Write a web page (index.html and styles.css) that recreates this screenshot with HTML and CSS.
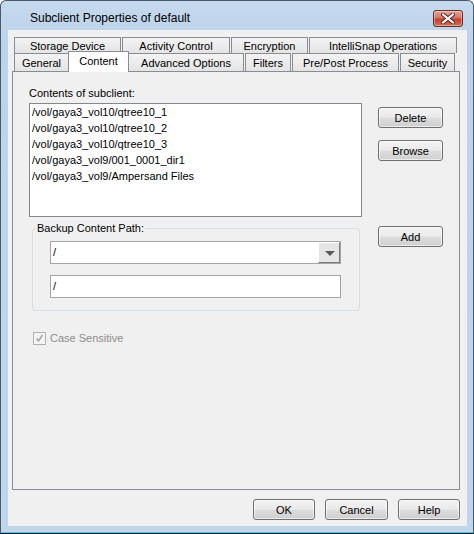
FILE: index.html
```html
<!DOCTYPE html>
<html lang="en">
<head>
<meta charset="UTF-8">
<title>Subclient Properties of default</title>
<link rel="stylesheet" href="styles.css">
</head>
<body>
<div class="window">
    <div class="titlebar">
        <span class="title">Subclient Properties of default</span>
        <button class="close" title="Close">
            <svg width="14" height="11" viewBox="0 0 14 11">
                <path d="M2 1.5 L12 9.5 M12 1.5 L2 9.5" stroke="#5a2520" stroke-width="4" stroke-linecap="square"/>
                <path d="M2 1.5 L12 9.5 M12 1.5 L2 9.5" stroke="#ffffff" stroke-width="2" stroke-linecap="square"/>
            </svg>
        </button>
    </div>

    <div class="client">
        <div class="tabs">
            <div class="tab-row">
                <div class="tab t-storage">Storage Device</div>
                <div class="tab t-activity">Activity Control</div>
                <div class="tab t-encrypt">Encryption</div>
                <div class="tab t-snap">IntelliSnap Operations</div>
            </div>
            <div class="tab-row front">
                <div class="tab t-general">General</div>
                <div class="tab t-content selected">Content</div>
                <div class="tab t-advanced">Advanced Options</div>
                <div class="tab t-filters">Filters</div>
                <div class="tab t-prepost">Pre/Post Process</div>
                <div class="tab t-security">Security</div>
            </div>
        </div>

        <div class="panel">
            <div class="row">
                <div>
                    <div class="label">Contents of subclient:</div>
                    <ul class="listbox">
                        <li>/vol/gaya3_vol10/qtree10_1</li>
                        <li>/vol/gaya3_vol10/qtree10_2</li>
                        <li>/vol/gaya3_vol10/qtree10_3</li>
                        <li>/vol/gaya3_vol9/001_0001_dir1</li>
                        <li>/vol/gaya3_vol9/Ampersand Files</li>
                    </ul>
                </div>
                <div class="side-buttons first">
                    <button class="btn">Delete</button>
                    <button class="btn">Browse</button>
                </div>
            </div>

            <div class="row path-row">
                <fieldset class="group">
                    <legend>Backup Content Path:</legend>
                    <div class="combo">
                        <span class="combo-value">/</span>
                        <span class="drop"></span>
                    </div>
                    <div class="textbox">/</div>
                </fieldset>
                <div class="side-buttons add">
                    <button class="btn">Add</button>
                </div>
            </div>

            <div class="check">
                <span class="box">
                    <svg width="9" height="9" viewBox="0 0 9 9">
                        <path d="M1.5 4.5 L3.5 7 L7.5 1" fill="none" stroke="#a3a3a3" stroke-width="1.5"/>
                    </svg>
                </span>
                <span>Case Sensitive</span>
            </div>
        </div>

        <div class="footer">
            <button class="btn b-ok">OK</button>
            <button class="btn b-cancel">Cancel</button>
            <button class="btn b-help">Help</button>
        </div>
    </div>
</div>
</body>
</html>
```

FILE: styles.css
```css
body {
    margin: 0;
    font-family: "Liberation Sans", Arial, sans-serif;
    font-size: 11px;
    color: #000;
    background: #fff;
}
.window {
    width: 474px;
    height: 534px;
    box-sizing: border-box;
    border: 1px solid #4b5a6b;
    border-bottom-color: #111;
    border-radius: 6px 6px 0 0;
    padding: 0 6px 7px 7px;
    background: linear-gradient(#c5d9ee, #bcd3ea 40px, #bfd6ec);
    box-shadow: inset 0 -1px 0 #3fd2f2;
}
.titlebar {
    height: 29px;
    display: flex;
    align-items: flex-start;
    justify-content: space-between;
    margin: 0 -6px 0 -7px;
    padding: 0 10px 0 29px;
}
.title {
    font-size: 12px;
    line-height: 14px;
    margin-top: 10px;
    color: #000;
}
.close {
    width: 30px;
    height: 17px;
    margin-top: 9px;
    padding: 0;
    border: 1px solid #6d2b22;
    border-radius: 3px;
    background: linear-gradient(#e6a597, #d27565 45%, #c0402e 55%, #d3755b);
    box-shadow: inset 0 0 0 1px rgba(255, 255, 255, 0.35);
    display: flex;
    align-items: center;
    justify-content: center;
}
.client {
    height: 496px;
    background: #f0f0f0;
    padding: 7px 0 0 4px;
    box-sizing: border-box;
}
.tabs {
    margin-left: 2px;
    width: 443px;
}
.tab-row {
    display: flex;
    gap: 1px;
    height: 16px;
    align-items: flex-start;
}
.tab-row.front {
    height: 18px;
}
.tab {
    box-sizing: border-box;
    height: 16px;
    line-height: 17px;
    text-align: center;
    border: 1px solid #898c95;
    border-bottom: none;
    background: linear-gradient(#f3f3f3, #e4e4e4);
    flex: 0 0 auto;
}
.front .tab {
    height: 18px;
    line-height: 19px;
}
.tab.selected {
    height: 21px;
    line-height: 19px;
    margin: -2px -2px 0 -2px;
    background: #fff;
    position: relative;
    z-index: 1;
}
.t-storage { width: 107px; }
.t-activity { width: 108px; }
.t-encrypt { width: 77px; }
.t-snap { width: 148px; }
.t-general { width: 55px; }
.t-content { width: 61px; }
.t-advanced { width: 116px; }
.t-filters { width: 46px; }
.t-prepost { width: 107px; }
.t-security { width: 55px; }
.panel {
    width: 448px;
    height: 419px;
    box-sizing: border-box;
    border: 1px solid #898c95;
    padding: 15px 0 0 16px;
}
.row {
    display: grid;
    grid-template-columns: 333px 65px;
    column-gap: 16px;
    align-items: start;
}
.label {
    line-height: 13px;
}
.listbox {
    list-style: none;
    margin: 3px 0 0 0;
    padding: 0 0 0 2px;
    height: 114px;
    box-sizing: border-box;
    border: 1px solid #828790;
    background: #fff;
}
.listbox li {
    line-height: 16px;
    white-space: nowrap;
}
.side-buttons {
    display: flex;
    flex-direction: column;
    gap: 12px;
}
.side-buttons.first {
    margin-top: 20px;
}
.side-buttons.add {
    margin-top: 4px;
}
.btn {
    height: 21px;
    width: 65px;
    padding: 0;
    font-family: inherit;
    font-size: 11px;
    color: #000;
    border: 1px solid #707070;
    border-radius: 3px;
    background: linear-gradient(#f2f2f2, #ebebeb 48%, #dddddd 52%, #cfcfcf);
    box-shadow: inset 0 0 0 1px rgba(255, 255, 255, 0.6);
}
.path-row {
    margin-top: 5px;
}
.group {
    margin: 0 0 0 3px;
    width: 328px;
    box-sizing: border-box;
    border: 1px solid #d5dfe5;
    border-radius: 3px;
    padding: 6px 18px 12px 17px;
}
.group legend {
    padding: 0 1px;
    margin-left: -14px;
    line-height: 13px;
}
.combo, .textbox {
    box-sizing: border-box;
    height: 23px;
    width: 291px;
    border: 1px solid #a5a5a5;
    background: #fff;
    line-height: 21px;
    padding-left: 2px;
}
.combo {
    display: flex;
    justify-content: space-between;
}
.drop {
    width: 22px;
    height: 21px;
    box-sizing: border-box;
    border-top: 1px solid #fff;
    border-left: 1px solid #fff;
    border-right: 1px solid #7a7a7a;
    border-bottom: 1px solid #7a7a7a;
    background: #e6e6e6;
    position: relative;
}
.drop::after {
    content: "";
    position: absolute;
    left: 6px;
    top: 8px;
    border-left: 5px solid transparent;
    border-right: 5px solid transparent;
    border-top: 5px solid #5a5a5a;
}
.textbox {
    margin-top: 11px;
}
.check {
    display: flex;
    align-items: center;
    gap: 4px;
    margin: 21px 0 0 4px;
    color: #8d8d8d;
    line-height: 13px;
}
.check .box {
    width: 13px;
    height: 13px;
    box-sizing: border-box;
    border: 1px solid #b1b1b1;
    background: #f4f4f4;
    display: flex;
    align-items: center;
    justify-content: center;
}
.footer {
    width: 448px;
    display: flex;
    justify-content: flex-end;
    gap: 10px;
    margin-top: 9px;
}
.b-ok { width: 62px; }
.b-cancel { width: 63px; }
.b-help { width: 62px; }
```
